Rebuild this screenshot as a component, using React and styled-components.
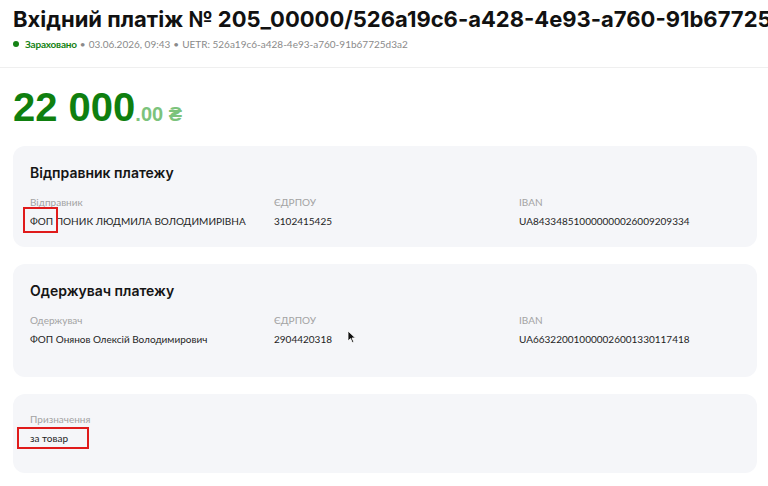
import React from 'react';
import styled, { createGlobalStyle } from 'styled-components';

const GlobalStyle = createGlobalStyle`
  html, body {
    margin: 0;
    padding: 0;
    background: #ffffff;
    font-family: 'Lato', 'Noto Sans', sans-serif;
    color: #222;
  }
  * {
    box-sizing: border-box;
  }
`;

const Header = styled.header`
  height: 68px;
  padding: 5px 0 0 13px;
  border-bottom: 1px solid #efefef;
  overflow: hidden;
`;

const Title = styled.h1`
  margin: 0;
  font-family: 'Inter', 'Noto Sans', sans-serif;
  font-weight: 700;
  font-size: 22px;
  line-height: 28px;
  color: #111;
  white-space: nowrap;
`;

const Meta = styled.div`
  display: flex;
  align-items: center;
  margin-top: 3px;
  font-size: 10px;
  line-height: 16px;
  color: #8a8a8a;
  white-space: nowrap;
`;

const StatusDot = styled.span`
  width: 6px;
  height: 6px;
  border-radius: 50%;
  background: #148214;
  margin: 0 6px 0 0;
`;

const Status = styled.span`
  color: #148214;
  font-weight: 700;
  letter-spacing: -0.2px;
`;

const Sep = styled.span`
  margin: 0 3px;
`;

const Main = styled.main`
  padding: 16px 11px 0 13px;
`;

const Amount = styled.div`
  font-family: 'Liberation Sans', Arial, sans-serif;
  font-weight: 700;
  font-size: 40px;
  line-height: 46px;
  color: #0f7f0f;
  margin-bottom: 16px;
`;

const Cents = styled.span`
  font-size: 20px;
  line-height: 1;
  color: #7cc37c;
`;

const Card = styled.section`
  position: relative;
  background: #f5f6f9;
  border-radius: 12px;
  padding: ${({ pt }) => pt || 17}px 17px ${({ pb }) => pb || 18}px;
  margin-bottom: 17px;
`;

const CardTitle = styled.h2`
  margin: 0 0 12px;
  font-family: 'Inter', 'Noto Sans', sans-serif;
  font-weight: 600;
  font-size: 14px;
  line-height: 20px;
  color: #151515;
`;

const Fields = styled.div`
  display: grid;
  grid-template-columns: 244px 245px 1fr;
`;

const Field = styled.div`
  display: flex;
  flex-direction: column;
  gap: 4px;
`;

const Label = styled.span`
  font-size: 10px;
  line-height: 14px;
  color: #a3a3a3;
`;

const Value = styled.span`
  font-size: 10px;
  line-height: 16px;
  color: #1e1e1e;
`;

const Highlight = styled.span`
  position: relative;
  &::before {
    content: '';
    position: absolute;
    top: ${({ t }) => t}px;
    bottom: ${({ b }) => b}px;
    left: ${({ l }) => l}px;
    right: ${({ r }) => r}px;
    border: 2px solid #e01b1b;
  }
`;

const Cursor = styled.svg`
  position: absolute;
  left: 334px;
  top: 66px;
`;

const PointerIcon = () => (
  <Cursor width="10" height="14" viewBox="0 0 10 14">
    <path d="M1 1 L1 11 L3.5 8.6 L5.3 12.6 L6.8 11.9 L5 8 L8.4 8 Z" fill="#111" stroke="#fff" strokeWidth="0.8" />
  </Cursor>
);

const App = () => (
  <>
    <GlobalStyle />
    <Header>
      <Title>Вхідний платіж № 205_00000/526a19c6-a428-4e93-a760-91b67725d3a2</Title>
      <Meta>
        <StatusDot />
        <Status>Зараховано</Status>
        <Sep>•</Sep>
        03.06.2026, 09:43
        <Sep>•</Sep>
        UETR: 526a19c6-a428-4e93-a760-91b67725d3a2
      </Meta>
    </Header>
    <Main>
      <Amount>
        22 000<Cents>.00 ₴</Cents>
      </Amount>

      <Card>
        <CardTitle>Відправник платежу</CardTitle>
        <Fields>
          <Field>
            <Label>Відправник</Label>
            <Value>
              <Highlight t={-8} b={-6} l={-7} r={-5}>ФОП</Highlight> ПОНИК ЛЮДМИЛА ВОЛОДИМИРІВНА
            </Value>
          </Field>
          <Field>
            <Label>ЄДРПОУ</Label>
            <Value>3102415425</Value>
          </Field>
          <Field>
            <Label>IBAN</Label>
            <Value>UA843348510000000026009209334</Value>
          </Field>
        </Fields>
      </Card>

      <Card pb={30}>
        <CardTitle>Одержувач платежу</CardTitle>
        <Fields>
          <Field>
            <Label>Одержувач</Label>
            <Value>ФОП Онянов Олексій Володимирович</Value>
          </Field>
          <Field>
            <Label>ЄДРПОУ</Label>
            <Value>2904420318</Value>
          </Field>
          <Field>
            <Label>IBAN</Label>
            <Value>UA663220010000026001330117418</Value>
          </Field>
        </Fields>
        <PointerIcon />
      </Card>

      <Card pt={18} pb={27}>
        <Field>
          <Label>Призначення</Label>
          <Value>
            <Highlight t={-5} b={-5} l={-13} r={-21}>за товар</Highlight>
          </Value>
        </Field>
      </Card>
    </Main>
  </>
);

export default App;
